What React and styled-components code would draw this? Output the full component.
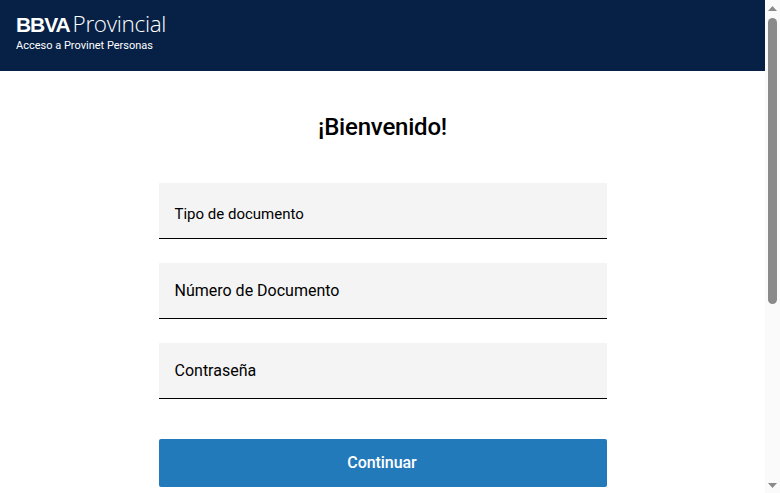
import React from "react";
import styled, { createGlobalStyle } from "styled-components";

const GlobalStyle = createGlobalStyle`
  html, body {
    margin: 0;
    padding: 0;
    height: 493px;
    overflow: hidden;
    background: #fff;
    font-family: Roboto, "Liberation Sans", sans-serif;
  }
`;

const Page = styled.div`
  display: flex;
  width: 780px;
  height: 493px;
  overflow: hidden;
`;

const Main = styled.div`
  flex: 1;
  min-width: 0;
`;

const Header = styled.header`
  height: 71px;
  box-sizing: border-box;
  padding: 12px 0 0 16px;
  background: #072146;
  color: #fff;
`;

const Logo = styled.div`
  display: flex;
  align-items: baseline;
  height: 24px;
  line-height: 24px;
`;

const LogoBold = styled.span`
  font-family: "Liberation Sans", sans-serif;
  font-size: 21px;
  font-weight: 700;
  letter-spacing: -1.1px;
  margin-right: 3px;
`;

const LogoLight = styled.span`
  font-family: "Open Sans", sans-serif;
  font-size: 22.5px;
  font-weight: 300;
  letter-spacing: -0.3px;
`;

const Subtitle = styled.div`
  margin-top: 4px;
  font-size: 11px;
  line-height: 12px;
`;

const Content = styled.main`
  display: flex;
  flex-direction: column;
  align-items: center;
  padding-top: 40px;
`;

const Title = styled.h1`
  margin: 0 0 40px;
  height: 32px;
  font-size: 24px;
  line-height: 32px;
  font-weight: 500;
  letter-spacing: -0.2px;
  color: #000;
`;

const Form = styled.form`
  display: flex;
  flex-direction: column;
  width: 448px;
  margin-left: 1px;
`;

const Field = styled.div`
  display: flex;
  align-items: center;
  height: 56px;
  box-sizing: border-box;
  margin-bottom: 24px;
  padding: ${(p) => (p.$small ? "6px" : "0")} 16px 0;
  background: #f4f4f4;
  border-bottom: 1px solid #000;
  font-size: ${(p) => (p.$small ? "15px" : "16px")};
  color: #000;
  text-indent: -0.5px;
`;

const Submit = styled.button`
  height: 48px;
  margin-top: 16px;
  padding: 0 2px 2px 0;
  border: none;
  border-radius: 2px;
  background: #237abb;
  color: #fff;
  font-family: inherit;
  font-size: 16px;
  font-weight: 500;
  letter-spacing: -0.05px;
`;

const Scrollbar = styled.div`
  display: flex;
  flex-direction: column;
  align-items: center;
  width: 15px;
  flex-shrink: 0;
  background: #fafafa;
`;

const Arrow = styled.svg`
  width: 9px;
  height: 5px;
  flex-shrink: 0;
  margin: ${(p) => p.$margin};
`;

const Thumb = styled.div`
  width: 9px;
  height: 286px;
  flex-shrink: 0;
  border-radius: 5px;
  background: #8a8a8a;
`;

const Spacer = styled.div`
  flex: 1;
`;

export default function App() {
  return (
    <Page>
      <GlobalStyle />
      <Main>
        <Header>
          <Logo>
            <LogoBold>BBVA</LogoBold>
            <LogoLight>Provincial</LogoLight>
          </Logo>
          <Subtitle>Acceso a Provinet Personas</Subtitle>
        </Header>
        <Content>
          <Title>¡Bienvenido!</Title>
          <Form>
            <Field $small>Tipo de documento</Field>
            <Field>Número de Documento</Field>
            <Field>Contraseña</Field>
            <Submit type="button">Continuar</Submit>
          </Form>
        </Content>
      </Main>
      <Scrollbar>
        <Arrow $margin="6px 0 7px" viewBox="0 0 9 5">
          <path d="M4.5 0L9 5H0z" fill="#8a8a8a" />
        </Arrow>
        <Thumb />
        <Spacer />
        <Arrow $margin="0 0 5px" viewBox="0 0 9 5">
          <path d="M0 0H9L4.5 5z" fill="#8a8a8a" />
        </Arrow>
      </Scrollbar>
    </Page>
  );
}
